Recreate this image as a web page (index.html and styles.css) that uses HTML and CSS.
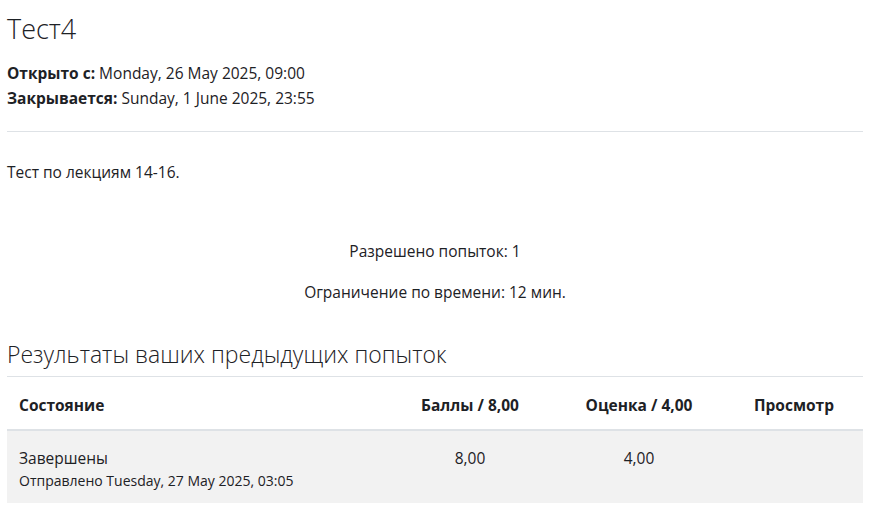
FILE: index.html
```html
<!DOCTYPE html>
<html lang="ru">
<head>
<meta charset="utf-8">
<link rel="stylesheet" href="styles.css">
</head>
<body>
<div class="page">
  <h2 class="title">Тест4</h2>
  <div class="dates">
    <div><strong>Открыто с:</strong> Monday, 26 May 2025, 09:00</div>
    <div><strong>Закрывается:</strong> Sunday, 1 June 2025, 23:55</div>
  </div>
  <hr class="sep">
  <p class="intro">Тест по лекциям 14-16.</p>
  <div class="info">
    <p>Разрешено попыток: 1</p>
    <p>Ограничение по времени: 12 мин.</p>
  </div>
  <h3 class="subtitle">Результаты ваших предыдущих попыток</h3>
  <table class="attempts">
    <colgroup>
      <col class="w-state">
      <col class="w-marks">
      <col class="w-grade">
      <col class="w-review">
    </colgroup>
    <thead>
      <tr>
        <th class="c-state">Состояние</th>
        <th class="c-num">Баллы / 8,00</th>
        <th class="c-num">Оценка / 4,00</th>
        <th class="c-num">Просмотр</th>
      </tr>
    </thead>
    <tbody>
      <tr>
        <td class="c-state">Завершены<span class="submitted">Отправлено Tuesday, 27 May 2025, 03:05</span></td>
        <td class="c-num">8,00</td>
        <td class="c-num">4,00</td>
        <td class="c-num"></td>
      </tr>
    </tbody>
  </table>
</div>
</body>
</html>
```
FILE: styles.css
```css
* { box-sizing: border-box; }
html, body { margin: 0; padding: 0; background: #fff; }
body {
  font-family: "Open Sans", "Noto Sans", sans-serif;
  font-size: 15.5px;
  line-height: 25px;
  color: #1d2125;
}
.page { padding: 0 10px 0 7px; }
.title {
  margin: 0;
  padding-top: 11px;
  font-size: 27px;
  font-weight: 300;
  line-height: 36px;
  height: 61px;
}
.dates { line-height: 25px; }
.dates strong { font-weight: 700; }
.sep {
  border: 0;
  border-top: 1px solid #dee2e6;
  margin: 20px 0 0 0;
}
.intro { margin: 28px 0 0 0; }
.info { text-align: center; margin-top: 54px; }
.info p { margin: 0 0 16px 0; }
.info p:last-child { margin-bottom: 0; }
.subtitle {
  margin: 35px 0 0 0;
  font-size: 23px;
  font-weight: 300;
  line-height: 28px;
  padding-bottom: 8px;
  border-bottom: 1px solid #dee2e6;
}
.attempts { width: 100%; border-collapse: collapse; table-layout: fixed; }
.w-state { width: 380px; }
.w-marks { width: 166px; }
.w-grade { width: 172px; }
.w-review { width: 138px; }
.attempts th {
  font-weight: 700;
  padding: 16px 12px 11px;
  border-bottom: 2px solid #dee2e6;
  text-align: center;
}
.attempts th.c-state, .attempts td.c-state { text-align: left; }
.attempts td {
  background: #f2f2f2;
  padding: 15px 12px 12px;
  vertical-align: top;
  text-align: center;
}
.attempts td .submitted { display: block; font-size: 14px; line-height: 21px; margin-top: -1px; }
```
